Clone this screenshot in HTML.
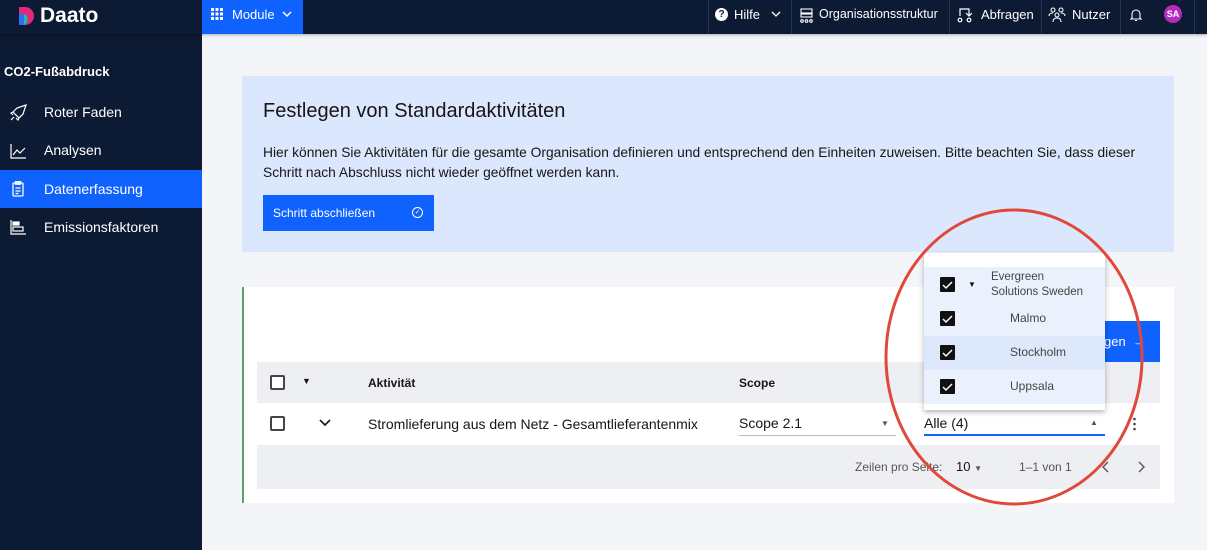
<!DOCTYPE html>
<html><head><meta charset="utf-8"><style>
*{box-sizing:border-box;margin:0;padding:0}
body{width:1207px;height:550px;overflow:hidden;background:#f4f5f8;font-family:"Liberation Sans",sans-serif;position:relative;color:#161616}
.abs{position:absolute}
.top{left:0;top:0;width:1207px;height:34px;background:#0d1a33;box-shadow:0 1px 3px rgba(0,0,0,.3);z-index:3}
.side{left:0;top:34px;width:202px;height:516px;background:#0d1a33}
.nav{color:#fff;font-size:14px;white-space:nowrap}
.cb{width:15px;height:15px;border:2px solid #444;border-radius:2px;background:#fff}
.ck{width:15px;height:15px;background:#111;border-radius:1px}
</style></head><body>
<div class="abs top">
 <svg class="abs" style="left:17px;top:6px" width="18" height="20" viewBox="0 0 18 20"><path d="M2 1h6a9 9 0 0 1 0 18H2z" fill="#e0287c"/><path d="M2 8h5a6 6 0 0 1 0 11H2z" fill="#19c3a0"/><path d="M2 8h5v11H2z" fill="#2a6fff"/></svg>
 <div class="abs nav" style="left:40px;top:4px;font-size:21px;font-weight:bold">Daato</div>
 <div class="abs" style="left:202px;top:0;width:101px;height:34px;background:#0f62fe"></div>
 <svg class="abs" style="left:211px;top:8px" width="12" height="12"><g fill="#fff"><rect x="0" y="0" width="3" height="3"/><rect x="4.5" y="0" width="3" height="3"/><rect x="9" y="0" width="3" height="3"/><rect x="0" y="4.5" width="3" height="3"/><rect x="4.5" y="4.5" width="3" height="3"/><rect x="9" y="4.5" width="3" height="3"/><rect x="0" y="9" width="3" height="3"/><rect x="4.5" y="9" width="3" height="3"/><rect x="9" y="9" width="3" height="3"/></g></svg>
 <div class="abs nav" style="left:232px;top:7px;font-size:13px">Module</div>
 <svg class="abs" style="left:282px;top:10px" width="10" height="8"><path d="M1 2l4 4 4-4" stroke="#fff" fill="none" stroke-width="1.5"/></svg>
 <div class="abs" style="left:708px;top:0;width:1px;height:34px;background:#253250"></div>
 <div class="abs" style="left:715px;top:8px;width:13px;height:13px;border-radius:50%;background:#fff;color:#0d1a33;font-size:10px;font-weight:bold;text-align:center;line-height:13px">?</div>
 <div class="abs nav" style="left:734px;top:7px;font-size:13px">Hilfe</div>
 <svg class="abs" style="left:771px;top:11px" width="10" height="8"><path d="M1 1l4 4 4-4" stroke="#fff" fill="none" stroke-width="1.3"/></svg>
 <div class="abs" style="left:791px;top:0;width:1px;height:34px;background:#253250"></div>
 <svg class="abs" style="left:800px;top:8px" width="13" height="15" fill="none" stroke="#fff" stroke-width="1.1"><rect x="1" y="1" width="11" height="4"/><rect x="1" y="6" width="11" height="3"/><circle cx="2" cy="13" r="1.3"/><circle cx="6.5" cy="13" r="1.3"/><circle cx="11" cy="13" r="1.3"/></svg>
 <div class="abs nav" style="left:819px;top:7px;font-size:12.5px">Organisationsstruktur</div>
 <div class="abs" style="left:949px;top:0;width:1px;height:34px;background:#253250"></div>
 <svg class="abs" style="left:957px;top:7px" width="15" height="16" fill="none" stroke="#fff" stroke-width="1.2"><path d="M3 9V2h9v7M9 6l3 3 3-3"/><circle cx="3" cy="13" r="1.8"/><circle cx="12" cy="13" r="1.8"/></svg>
 <div class="abs nav" style="left:981px;top:7px;font-size:13px">Abfragen</div>
 <div class="abs" style="left:1041px;top:0;width:1px;height:34px;background:#253250"></div>
 <svg class="abs" style="left:1048px;top:6px" width="18" height="16" fill="none" stroke="#fff" stroke-width="1.1"><circle cx="5" cy="4" r="2"/><circle cx="13" cy="4" r="2"/><circle cx="9" cy="9" r="2"/><path d="M1 10c0-2 2-3 4-3M17 10c0-2-2-3-4-3M5 16c0-3 2-4 4-4s4 1 4 4"/></svg>
 <div class="abs nav" style="left:1072px;top:7px;font-size:13px">Nutzer</div>
 <div class="abs" style="left:1120px;top:0;width:1px;height:34px;background:#253250"></div>
 <svg class="abs" style="left:1130px;top:8px" width="12" height="14" fill="none" stroke="#fff" stroke-width="1.1"><path d="M2 10V6a4 4 0 0 1 8 0v4l1 1H1zM5 12.5h2"/></svg>
 <div class="abs" style="left:1164px;top:5px;width:18px;height:18px;border-radius:50%;background:#b52bbd;color:#fff;font-size:9px;font-weight:bold;text-align:center;line-height:18px">SA</div>
 <div class="abs" style="left:1194px;top:0;width:1px;height:34px;background:#253250"></div>
</div>
<div class="abs side"></div>
<div class="abs nav" style="left:4px;top:64px;font-weight:bold;font-size:13px">CO2-Fußabdruck</div>
<svg class="abs" style="left:10px;top:104px" width="17" height="17" fill="none" stroke="#fff" stroke-width="1.2"><path d="M16 1L7 4 3 8l6 6 4-4zM3 8l-2 1 2 2M9 14l-1 2-2-2M4 13l-3 3"/></svg>
<div class="abs nav" style="left:44px;top:104px">Roter Faden</div>
<svg class="abs" style="left:10px;top:143px" width="17" height="16" fill="none" stroke="#fff" stroke-width="1.2"><path d="M1 1v14h15M3 12l4-5 3 3 5-5"/></svg>
<div class="abs nav" style="left:44px;top:142px">Analysen</div>
<div class="abs" style="left:0;top:170px;width:202px;height:38px;background:#0f62fe"></div>
<svg class="abs" style="left:12px;top:181px" width="12" height="16" fill="none" stroke="#fff" stroke-width="1.3"><rect x="1" y="2" width="10" height="13" rx="1"/><rect x="3.5" y="0.7" width="5" height="2.5"/><path d="M3.5 7h5M3.5 10h5M3.5 12.5h3"/></svg>
<div class="abs nav" style="left:44px;top:181px">Datenerfassung</div>
<svg class="abs" style="left:10px;top:219px" width="17" height="16" fill="none" stroke="#fff" stroke-width="1.2"><path d="M1 1v14h15"/><rect x="3" y="3" width="6" height="3" fill="#fff"/><rect x="3" y="8" width="10" height="4"/></svg>
<div class="abs nav" style="left:44px;top:219px">Emissionsfaktoren</div>

<div class="abs" style="left:242px;top:76px;width:932px;height:176px;background:#dbe7fd"></div>
<div class="abs" style="left:263px;top:100px;font-size:20px;color:#161616">Festlegen von Standardaktivitäten</div>
<div class="abs" style="left:263px;top:143px;font-size:13.8px;line-height:20px;color:#161616;width:890px">Hier können Sie Aktivitäten für die gesamte Organisation definieren und entsprechend den Einheiten zuweisen. Bitte beachten Sie, dass dieser Schritt nach Abschluss nicht wieder geöffnet werden kann.</div>
<div class="abs" style="left:263px;top:195px;width:171px;height:36px;background:#0f62fe"></div>
<div class="abs" style="left:273px;top:206px;font-size:12px;color:#fff">Schritt abschließen</div>
<div class="abs" style="left:412px;top:207px;width:11px;height:11px;border:1px solid #fff;border-radius:50%;font-size:7px;color:#fff;text-align:center;line-height:9px">✓</div>

<div class="abs" style="left:242px;top:287px;width:932px;height:216px;background:#fff;border-left:2px solid #5aa46c"></div>
<div class="abs" style="left:1090px;top:321px;width:70px;height:41px;background:#0f62fe"></div>
<div class="abs" style="left:1104px;top:334px;font-size:13px;color:#fff">gen &nbsp;→</div>
<div class="abs" style="left:257px;top:362px;width:903px;height:41px;background:#eeeff2"></div>
<div class="abs cb" style="left:270px;top:375px"></div>
<div class="abs" style="left:302px;top:376px;font-size:9px">▼</div>
<div class="abs" style="left:368px;top:376px;font-size:12px;font-weight:bold">Aktivität</div>
<div class="abs" style="left:739px;top:376px;font-size:12px;font-weight:bold">Scope</div>
<div class="abs cb" style="left:270px;top:416px"></div>
<svg class="abs" style="left:319px;top:419px" width="12" height="8"><path d="M1 1l5 5 5-5" stroke="#222" fill="none" stroke-width="1.8"/></svg>
<div class="abs" style="left:368px;top:416px;font-size:14px">Stromlieferung aus dem Netz - Gesamtlieferantenmix</div>
<div class="abs" style="left:739px;top:415px;font-size:14px">Scope 2.1</div>
<div class="abs" style="left:739px;top:435px;width:157px;height:1px;background:#bbb"></div>
<div class="abs" style="left:881px;top:419px;font-size:8px;color:#555">▼</div>
<div class="abs" style="left:924px;top:415px;font-size:14px">Alle (4)</div>
<div class="abs" style="left:924px;top:434px;width:181px;height:2px;background:#0f62fe"></div>
<div class="abs" style="left:1090px;top:418px;font-size:8px;color:#555">▲</div>
<svg class="abs" style="left:1132px;top:417px" width="5" height="14"><g fill="#444"><circle cx="2.5" cy="2" r="1.3"/><circle cx="2.5" cy="7" r="1.3"/><circle cx="2.5" cy="12" r="1.3"/></g></svg>
<div class="abs" style="left:257px;top:445px;width:903px;height:44px;background:#eeeff2"></div>
<div class="abs" style="left:855px;top:460px;font-size:12px;color:#555">Zeilen pro Seite:</div>
<div class="abs" style="left:956px;top:459px;font-size:13px">10 <span style="font-size:8px;color:#555">▼</span></div>
<div class="abs" style="left:1019px;top:460px;font-size:12px;color:#555">1–1 von 1</div>
<svg class="abs" style="left:1102px;top:461px" width="8" height="12"><path d="M6 1L1 6l5 5" stroke="#555" fill="none" stroke-width="1.4"/></svg>
<svg class="abs" style="left:1137px;top:461px" width="8" height="12"><path d="M2 1l5 5-5 5" stroke="#555" fill="none" stroke-width="1.4"/></svg>

<div class="abs" style="left:924px;top:253px;width:181px;height:157px;background:#fff;box-shadow:0 2px 5px rgba(0,0,0,.3)"></div>
<div class="abs" style="left:924px;top:267px;width:181px;height:137px;background:#eaf1fd"></div>
<div class="abs" style="left:924px;top:336px;width:181px;height:34px;background:#dde8fb"></div>
<div class="abs ck" style="left:940px;top:277px"></div>
<div class="abs" style="left:968px;top:280px;font-size:8px">▼</div>
<div class="abs" style="left:991px;top:270px;font-size:11.5px;color:#444;line-height:15px">Evergreen<br>Solutions Sweden</div>
<div class="abs ck" style="left:940px;top:311px"></div>
<div class="abs" style="left:1010px;top:311px;font-size:12px;color:#444">Malmo</div>
<div class="abs ck" style="left:940px;top:345px"></div>
<div class="abs" style="left:1010px;top:345px;font-size:12px;color:#444">Stockholm</div>
<div class="abs ck" style="left:940px;top:379px"></div>
<div class="abs" style="left:1010px;top:379px;font-size:12px;color:#444">Uppsala</div>
<svg class="abs" style="left:0;top:0" width="1207" height="550"><g stroke="#fff" stroke-width="1.5" fill="none"><path d="M943 285l3 3 6-6M943 319l3 3 6-6M943 353l3 3 6-6M943 387l3 3 6-6"/></g>
<ellipse cx="1014" cy="357" rx="128" ry="147" stroke="#e0483a" stroke-width="3" fill="none"/></svg>
</body></html>
